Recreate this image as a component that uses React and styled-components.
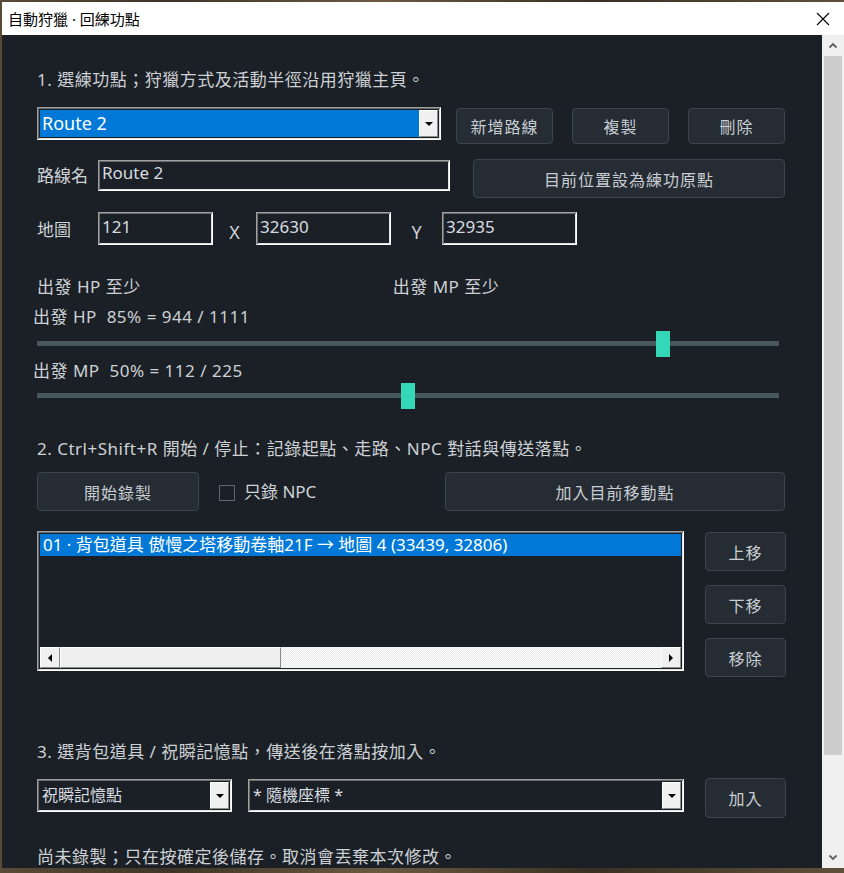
import React from "react";
import styled, { createGlobalStyle } from "styled-components";

const Global = createGlobalStyle`
  html, body { margin: 0; padding: 0; }
  body {
    width: 844px; height: 873px; overflow: hidden;
    background: linear-gradient(90deg, #5a4b36 0%, #3f3426 20%, #6b5a40 45%, #3a3022 70%, #5f503a 100%);
    font-family: "Noto Sans", "Noto Sans CJK TC", sans-serif;
  }
`;

const Win = styled.div`
  margin: 2px 0 0 2px;
  width: 842px;
  height: 866px;
  display: flex;
  flex-direction: column;
  background: #1b2026;
`;

const TitleBar = styled.div`
  height: 33px;
  background: #ffffff;
  display: flex;
  align-items: center;
  justify-content: space-between;
  padding-left: 6px;
  font-size: 15px;
  color: #000;
`;

const CloseBtn = styled.div`
  width: 42px;
  height: 33px;
  display: flex;
  align-items: center;
  justify-content: center;
`;

const Body = styled.div`
  flex: 1;
  display: flex;
  overflow: hidden;
`;

const Content = styled.div`
  flex: 1;
  padding-left: 35px;
  display: flex;
  flex-direction: column;
  align-items: flex-start;
  color: #d0d4d8;
`;

const VScroll = styled.div`
  width: 22px;
  background: #f0f0f0;
  display: flex;
  flex-direction: column;
  align-items: center;
`;

const VArrow = styled.div`
  height: 21px;
  width: 22px;
  display: flex;
  align-items: center;
  justify-content: center;
`;

const VThumb = styled.div`
  width: 18px;
  height: 699px;
  background: #cdcdcd;
`;

const Spacer = styled.div`
  flex: 1;
`;

const Label = styled.div`
  font-size: 17px;
  letter-spacing: 0.5px;
  line-height: 22px;
  margin-top: ${(p) => p.$mt || 0}px;
  margin-left: ${(p) => p.$ml || 0}px;
  white-space: nowrap;
  color: #cdd1d5;
`;

const Row = styled.div`
  display: flex;
  align-items: flex-start;
  width: ${(p) => (p.$w ? `${p.$w}px` : "auto")};
  margin-top: ${(p) => p.$mt || 0}px;
`;

const Btn = styled.div`
  box-sizing: border-box;
  width: ${(p) => p.$w}px;
  height: ${(p) => p.$h || 36}px;
  margin-left: ${(p) => (p.$auto ? "auto" : `${p.$ml || 0}px`)};
  margin-top: ${(p) => p.$mt || 0}px;
  background: #252c33;
  border: 1px solid #3b4550;
  border-radius: 4px;
  color: #c9ced3;
  font-size: 16px;
  letter-spacing: 1px;
  display: flex;
  align-items: center;
  justify-content: center;
`;

const Sunken = styled.div`
  box-sizing: border-box;
  width: ${(p) => p.$w}px;
  height: ${(p) => p.$h || 33}px;
  margin-left: ${(p) => p.$ml || 0}px;
  margin-top: ${(p) => p.$mt || 0}px;
  border: 1px solid;
  border-color: #a0a0a0 #ffffff #ffffff #a0a0a0;
  box-shadow: inset 1px 1px 0 #6a6a6a, inset -1px -1px 0 #e3e3e3;
  background: #1b2026;
  display: flex;
`;

const ComboBox = styled(Sunken)`
  padding: 2px;
`;

const ComboText = styled.div`
  flex: 1;
  background: ${(p) => (p.$sel ? "#0078d7" : "transparent")};
  color: ${(p) => (p.$sel ? "#ffffff" : "#d8dce0")};
  font-size: ${(p) => p.$fs || 16}px;
  line-height: 27px;
  padding-left: 2px;
  white-space: nowrap;
  overflow: hidden;
`;

const DropBtn = styled.div`
  box-sizing: border-box;
  width: 19px;
  background: #f0f0f0;
  border: 1px solid;
  border-color: #ffffff #8a8a8a #8a8a8a #ffffff;
  display: flex;
  align-items: center;
  justify-content: center;
`;

const Tri = styled.div`
  width: 0;
  height: 0;
  border-style: solid;
  border-width: ${(p) =>
    p.$dir === "down"
      ? "4px 4px 0 4px"
      : p.$dir === "left"
      ? "4px 4px 4px 0"
      : "4px 0 4px 4px"};
  border-color: ${(p) =>
    p.$dir === "down"
      ? "#000 transparent transparent transparent"
      : p.$dir === "left"
      ? "transparent #000 transparent transparent"
      : "transparent transparent transparent #000"};
`;

const InputText = styled.div`
  color: #d8dce0;
  font-size: 17px;
  line-height: 24px;
  padding-left: 3px;
  padding-top: ${(p) => p.$pt || 0}px;
  white-space: nowrap;
`;

const Axis = styled.div`
  width: ${(p) => p.$w}px;
  font-size: 18px;
  line-height: 33px;
  padding-top: 4px;
  text-align: center;
  color: #d0d4d8;
`;

const FieldLabel = styled.div`
  width: 61px;
  font-size: 17px;
  line-height: ${(p) => p.$lh || 31}px;
  color: #d0d4d8;
  padding-top: ${(p) => p.$pt || 0}px;
`;

const SliderWrap = styled.div`
  position: relative;
  width: 742px;
  height: 26px;
  margin-top: ${(p) => p.$mt || 0}px;
`;

const Track = styled.div`
  position: absolute;
  left: 0;
  right: 0;
  top: 10px;
  height: 5px;
  background: #46585b;
`;

const Thumb = styled.div`
  position: absolute;
  top: 0;
  width: 14px;
  height: 26px;
  background: #34d8b8;
`;

const Check = styled.div`
  box-sizing: border-box;
  width: 16px;
  height: 16px;
  border: 1px solid #5b6670;
  background: #1b2026;
  margin: 13px 9px 0 20px;
`;

const CheckLabel = styled.div`
  font-size: 17px;
  line-height: 39px;
  color: #d0d4d8;
  white-space: nowrap;
`;

const List = styled(Sunken)`
  flex-direction: column;
  padding: 2px;
`;

const ListItem = styled.div`
  height: 22px;
  background: #0078d7;
  color: #ffffff;
  font-size: 17px;
  line-height: 22px;
  padding-left: 3px;
  white-space: nowrap;
  overflow: hidden;
`;

const HScroll = styled.div`
  margin-top: auto;
  height: 21px;
  display: flex;
  background: repeating-conic-gradient(#ffffff 0 25%, #e9e9e9 0 50%) 0 0 / 2px 2px;
`;

const HArrow = styled.div`
  box-sizing: border-box;
  width: 20px;
  background: #f0f0f0;
  border: 1px solid;
  border-color: #ffffff #8a8a8a #8a8a8a #ffffff;
  display: flex;
  align-items: center;
  justify-content: center;
`;

const HThumb = styled.div`
  box-sizing: border-box;
  width: 221px;
  background: #efefef;
  border: 1px solid;
  border-color: #ffffff #8a8a8a #8a8a8a #ffffff;
`;

const SideCol = styled.div`
  display: flex;
  flex-direction: column;
  gap: 14px;
  margin-left: 21px;
  margin-top: 1px;
`;

const Chevron = ({ up }) => (
  <svg width="10" height="7" viewBox="0 0 10 7">
    <path
      d={up ? "M1.5 5.5 L5 2 L8.5 5.5" : "M1.5 1.5 L5 5 L8.5 1.5"}
      fill="none"
      stroke="#606060"
      strokeWidth="1.8"
    />
  </svg>
);

const Slider = ({ value, mt }) => (
  <SliderWrap $mt={mt}>
    <Track />
    <Thumb style={{ left: `${Math.round(value * (742 - 14))}px` }} />
  </SliderWrap>
);

const Combo = ({ w, text, sel, fs, ml, mt }) => (
  <ComboBox $w={w} $ml={ml} $mt={mt}>
    <ComboText $sel={sel} $fs={fs}>{text}</ComboText>
    <DropBtn>
      <Tri $dir="down" />
    </DropBtn>
  </ComboBox>
);

export default function App() {
  return (
    <>
      <Global />
      <Win>
        <TitleBar>
          <span>自動狩獵 · 回練功點</span>
          <CloseBtn>
            <svg width="14" height="14" viewBox="0 0 14 14">
              <path d="M1 1 L13 13 M13 1 L1 13" stroke="#000" strokeWidth="1.1" />
            </svg>
          </CloseBtn>
        </TitleBar>
        <Body>
          <Content>
            <Label $mt={34}>1. 選練功點；狩獵方式及活動半徑沿用狩獵主頁。</Label>

            <Row $mt={16} $w={748}>
              <Combo w={404} text="Route 2" sel fs={18} />
              <Btn $w={97} $ml={15} $mt={1}>新增路線</Btn>
              <Btn $w={97} $ml={19} $mt={1}>複製</Btn>
              <Btn $w={97} $ml={19} $mt={1}>刪除</Btn>
            </Row>

            <Row $mt={15} $w={748}>
              <FieldLabel $pt={1}>路線名</FieldLabel>
              <Sunken $w={352} $h={31} $mt={1}>
                <InputText>Route 2</InputText>
              </Sunken>
              <Btn $w={312} $h={39} $auto>目前位置設為練功原點</Btn>
            </Row>

            <Row $mt={14}>
              <FieldLabel $lh={36}>地圖</FieldLabel>
              <Sunken $w={115}>
                <InputText $pt={2}>121</InputText>
              </Sunken>
              <Axis $w={43}>X</Axis>
              <Sunken $w={135}>
                <InputText $pt={2}>32630</InputText>
              </Sunken>
              <Axis $w={51}>Y</Axis>
              <Sunken $w={135}>
                <InputText $pt={2}>32935</InputText>
              </Sunken>
            </Row>

            <Row $mt={27}>
              <Label>出發 HP 至少</Label>
              <Label $ml={252}>出發 MP 至少</Label>
            </Row>

            <Label $mt={8} $ml={-4}>出發 HP&nbsp; 85% = 944 / 1111</Label>
            <Slider value={0.85} mt={3} />
            <Label $mt={5} $ml={-4}>出發 MP&nbsp; 50% = 112 / 225</Label>
            <Slider value={0.5} mt={1} />

            <Label $mt={32}>2. Ctrl+Shift+R 開始 / 停止：記錄起點、走路、NPC 對話與傳送落點。</Label>

            <Row $mt={12} $w={748}>
              <Btn $w={162} $h={39}>開始錄製</Btn>
              <Check />
              <CheckLabel>只錄 NPC</CheckLabel>
              <Btn $w={340} $h={39} $auto>加入目前移動點</Btn>
            </Row>

            <Row $mt={20}>
              <List $w={647} $h={140}>
                <ListItem>01 · 背包道具 傲慢之塔移動卷軸21F → 地圖 4 (33439, 32806)</ListItem>
                <HScroll>
                  <HArrow>
                    <Tri $dir="left" />
                  </HArrow>
                  <HThumb />
                  <Spacer />
                  <HArrow>
                    <Tri $dir="right" />
                  </HArrow>
                </HScroll>
              </List>
              <SideCol>
                <Btn $w={81} $h={39}>上移</Btn>
                <Btn $w={81} $h={39}>下移</Btn>
                <Btn $w={81} $h={39}>移除</Btn>
              </SideCol>
            </Row>

            <Label $mt={64}>3. 選背包道具 / 祝瞬記憶點，傳送後在落點按加入。</Label>

            <Row $mt={15}>
              <Combo w={195} mt={1} text="祝瞬記憶點" />
              <Combo w={436} ml={16} mt={1} text="* 隨機座標 *" />
              <Btn $w={81} $h={40} $ml={21}>加入</Btn>
            </Row>

            <Label $mt={28}>尚未錄製；只在按確定後儲存。取消會丟棄本次修改。</Label>
          </Content>
          <VScroll>
            <VArrow>
              <Chevron up />
            </VArrow>
            <VThumb />
            <Spacer />
            <VArrow>
              <Chevron />
            </VArrow>
          </VScroll>
        </Body>
      </Win>
    </>
  );
}
